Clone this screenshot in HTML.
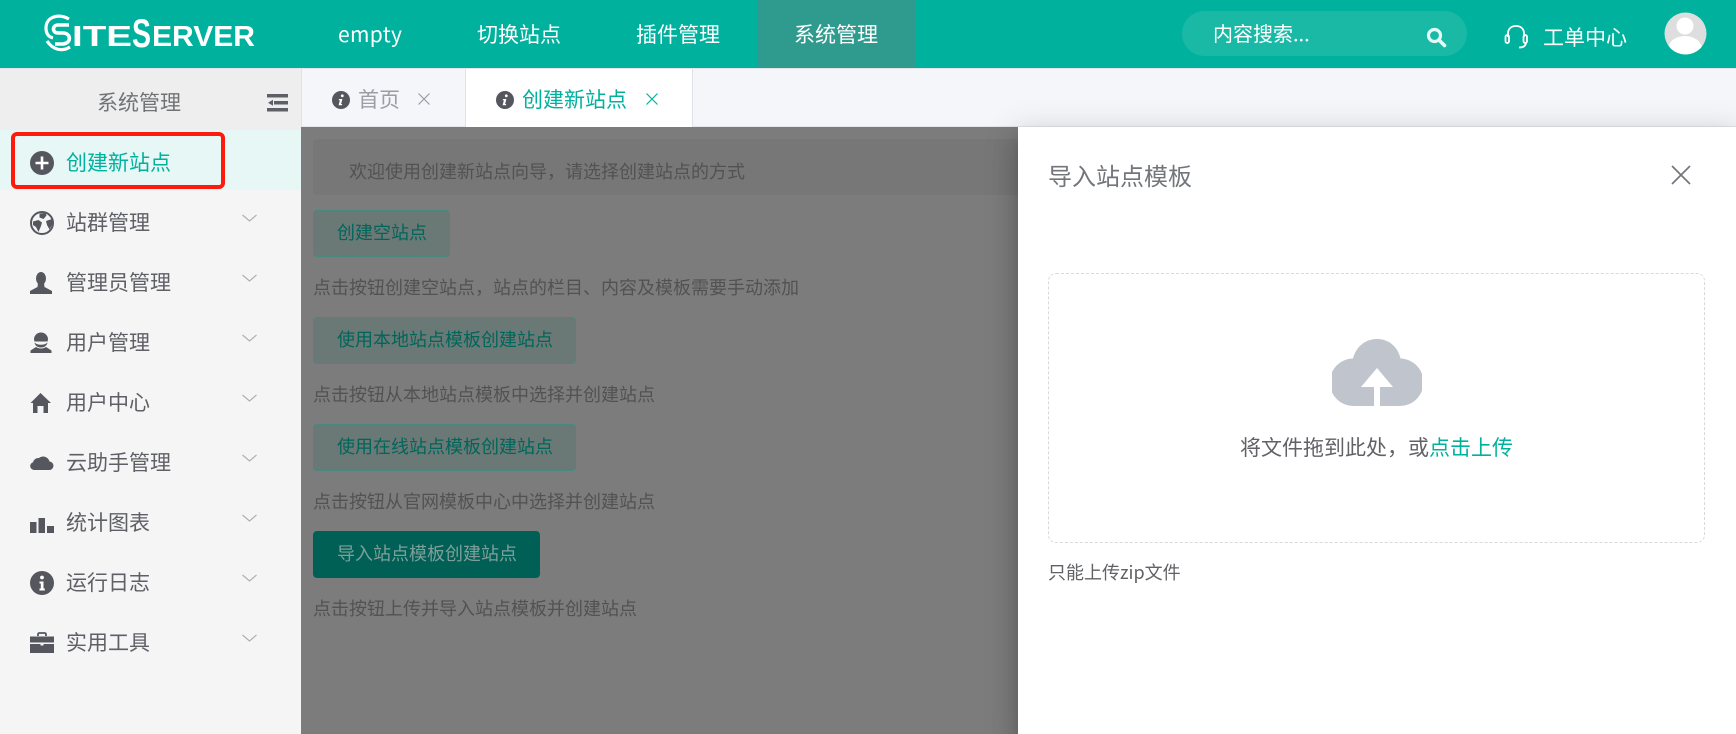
<!DOCTYPE html>
<html lang="zh"><head><meta charset="utf-8"><title>SiteServer</title>
<style>
*{box-sizing:border-box}
html,body{margin:0;padding:0;width:1736px;height:734px;overflow:hidden;background:#fff}
body{font-family:"Liberation Sans","Noto Sans CJK SC",sans-serif;position:relative;color:#606266}
.a{position:absolute}
.t{position:absolute;white-space:nowrap;font-family:"Noto Sans CJK SC","Liberation Sans",sans-serif;line-height:30px;height:30px}
svg{position:absolute;display:block}
.side{font-size:21px;color:#5f6066;left:66px}
.desc{font-size:18px;color:#525252;left:313px}
.btn{position:absolute;left:313px;height:47px;border-radius:4px;border:1px solid #47897f;background:#6a7876;color:#00665a;font-size:18px;font-family:"Noto Sans CJK SC",sans-serif;line-height:43px;padding-left:23px;white-space:nowrap}
</style></head><body>

<div class="a" style="left:0;top:0;width:1736px;height:68px;background:#00b19d"></div>
<div class="a" style="left:757px;top:0;width:159px;height:68px;background:#2f9a8e"></div>
<div class="a" style="left:0;top:68px;width:1736px;height:1px;background:#e3e5ea"></div>

<svg style="left:40px;top:10px" width="222" height="46" viewBox="40 10 222 46">
  <path d="M69 19 C58 13 46 17 46 28 C46 34 49 37 53 38" fill="none" stroke="#fff" stroke-width="3.200"/>
  <path d="M69 25 H58 C52 25 52 33 58 33 H63 C71 33 72 43 63 44 H55" fill="none" stroke="#fff" stroke-width="3.600"/>
  <path d="M47 41 C53 50 62 52 70 47" fill="none" stroke="#fff" stroke-width="3.200"/>
  <text x="72" y="46" font-family="Liberation Sans" font-weight="700" font-size="29" fill="#fff" textLength="60" lengthAdjust="spacingAndGlyphs">ITE</text>
  <text x="132" y="47" font-family="Liberation Sans" font-weight="700" font-size="40" fill="#fff" textLength="19" lengthAdjust="spacingAndGlyphs">S</text>
  <text x="152" y="46" font-family="Liberation Sans" font-weight="700" font-size="29" fill="#fff" textLength="103" lengthAdjust="spacingAndGlyphs">ERVER</text>
</svg>

<div class="t" style="left:338px;top:19px;font-size:21px;color:#fff;letter-spacing:.35px">empty</div>
<div class="t" style="left:477px;top:19px;font-size:21px;color:#fff">切换站点</div>
<div class="t" style="left:636px;top:19px;font-size:21px;color:#fff">插件管理</div>
<div class="t" style="left:794px;top:19px;font-size:21px;color:#fff">系统管理</div>

<div class="a" style="left:1182px;top:11px;width:285px;height:45px;border-radius:23px;background:#1ab9a5"></div>
<div class="t" style="left:1213px;top:18px;font-size:20px;color:#fff">内容搜索...</div>
<svg style="left:1424px;top:25px" width="24" height="24" viewBox="0 0 24 24"><circle cx="10.500" cy="10.500" r="6" fill="none" stroke="#e6f7f5" stroke-width="3.200"/><path d="M15 15l5.500 5.500" stroke="#e6f7f5" stroke-width="3.600" stroke-linecap="round"/></svg>
<svg style="left:1502px;top:23px" width="28" height="28" viewBox="0 0 28 28" fill="none" stroke="#fff" stroke-width="1.800"><path d="M6 14V10.500C6 5.500 9.500 3 14 3s8 2.500 8 7.500V14"/><rect x="3.500" y="12" width="3.500" height="8" rx="1.700"/><rect x="21.500" y="12" width="3.500" height="8" rx="1.700"/><path d="M24 20c-.5 3-3 4.500-7 4.500"/></svg>
<div class="t" style="left:1543px;top:22px;font-size:21px;color:#fff">工单中心</div>
<svg style="left:1664px;top:12px" width="43" height="43" viewBox="0 0 43 43"><defs><clipPath id="c"><circle cx="21.500" cy="21.500" r="21"/></clipPath></defs><circle cx="21.500" cy="21.500" r="21" fill="#dedede"/><g clip-path="url(#c)" fill="#fff"><circle cx="21" cy="14" r="8.500"/><ellipse cx="21" cy="37" rx="17" ry="13"/></g></svg>

<div class="a" style="left:0;top:69px;width:301px;height:665px;background:#f5f5f5"></div>
<div class="a" style="left:0;top:69px;width:301px;height:61px;background:#eeeeee"></div>
<div class="t" style="left:97px;top:87px;font-size:21px;color:#707276">系统管理</div>
<svg style="left:267px;top:94px" width="21" height="18" viewBox="0 0 21 18" fill="#5f6066"><rect x="0" y="0" width="21" height="3.500"/><rect x="7" y="7" width="14" height="3.500"/><path d="M1 8.700L6 5.700V11.700Z"/><rect x="0" y="14" width="21" height="3.500"/></svg>
<div class="a" style="left:0;top:130px;width:301px;height:60px;background:#e6f7f5"></div>
<div class="a" style="left:11px;top:132px;width:214px;height:57px;border:4px solid #fe1b0d;border-radius:6px"></div>

<svg style="left:30px;top:151px" width="24" height="24" viewBox="0 0 24 24"><circle cx="12" cy="12" r="12" fill="#55565e"/><path d="M12 5.500v13M5.500 12h13" stroke="#fff" stroke-width="2.600"/></svg>
<div class="t side" style="top:147px;color:#00b19d">创建新站点</div>

<svg style="left:30px;top:211px" width="24" height="24" viewBox="0 0 24 24"><circle cx="12" cy="12" r="11" fill="#f5f5f5" stroke="#55565e" stroke-width="2"/><path d="M3 10.500l5.500-1.500 3.500 2.500-1 3.500-2.500 6L6 16 3 14zM9.500 2.500l6-.5 1 2.500-3 3.500-4-1.500zM16 10l6-2 .5 5-3 5.500-2.500-4.500z" fill="#55565e"/></svg>
<div class="t side" style="top:207px">站群管理</div>
<svg style="left:30px;top:272px" width="24" height="22" viewBox="0 0 24 22" fill="#55565e"><ellipse cx="11" cy="6.500" rx="5" ry="6.500"/><path d="M8 11h6l.5 4 7.500 4v3H0v-3l7.500-4z"/></svg>
<div class="t side" style="top:267px">管理员管理</div>
<svg style="left:30px;top:332px" width="24" height="22" viewBox="0 0 24 22" fill="#55565e"><path d="M4 7.500a7 7 0 0 1 14 0l-.5 2h-13z"/><path d="M4.500 10.500c3 3 10 3 13 0-.5 3-3 5-6.500 5s-6-2-6.500-5z"/><path d="M6 15c3 2 7 2 10 0l5.500 3.500V21H.500v-2.500z"/></svg>
<div class="t side" style="top:327px">用户管理</div>
<svg style="left:30px;top:393px" width="24" height="20" viewBox="0 0 24 20" fill="#55565e"><path d="M10.500 0L21 10h-3v10h-4.500v-7h-6v7H3V10H.500z"/></svg>
<div class="t side" style="top:387px">用户中心</div>
<svg style="left:30px;top:454px" width="24" height="16" viewBox="0 0 24 16" fill="#55565e"><path d="M4 16A4 4 0 0 1 3 8.200 5.500 5.500 0 0 1 9 4 6.500 6.500 0 0 1 19.500 7.500 4.300 4.300 0 0 1 20 16z"/></svg>
<div class="t side" style="top:447px">云助手管理</div>
<svg style="left:30px;top:518px" width="24" height="15" viewBox="0 0 24 15" fill="#55565e"><rect y="4" width="6.500" height="11"/><rect x="8.500" y="0" width="6.500" height="15"/><rect x="17" y="8" width="7" height="7"/></svg>
<div class="t side" style="top:507px">统计图表</div>
<svg style="left:30px;top:571px" width="24" height="24" viewBox="0 0 24 24"><circle cx="12" cy="12" r="12" fill="#55565e"/><circle cx="12" cy="6.500" r="1.900" fill="#fff"/><path d="M9.500 10.500h4v7h1.300v2H9.500v-2h1.300v-5H9.500z" fill="#fff"/></svg>
<div class="t side" style="top:567px">运行日志</div>
<svg style="left:30px;top:632px" width="24" height="21" viewBox="0 0 24 21" fill="#55565e"><path d="M8 4V2.500Q8 1 9.500 1h5Q16 1 16 2.500V4" fill="none" stroke="#55565e" stroke-width="1.800"/><path d="M0 4.500h24v6H0zM0 12h10.500v1.500h3V12H24v9H0z"/></svg>
<div class="t side" style="top:627px">实用工具</div>

<svg style="left:242px;top:213px" width="15" height="430" viewBox="0 0 15 430" fill="none" stroke="#adafb3" stroke-width="1.200"><path d="M.500 2l7 6 7-6M.500 62l7 6 7-6M.500 122l7 6 7-6M.500 182l7 6 7-6M.500 242l7 6 7-6M.500 302l7 6 7-6M.500 362l7 6 7-6M.500 422l7 6 7-6"/></svg>

<div class="a" style="left:301px;top:69px;width:1435px;height:58px;background:#f5f6fa;border-bottom:1px solid #e3e5ea"></div>
<div class="a" style="left:301px;top:69px;width:1px;height:58px;background:#dfe2ea"></div>
<div class="a" style="left:465px;top:69px;width:228px;height:58px;background:#fff;border-left:1px solid #dfe2ea;border-right:1px solid #dfe2ea"></div>
<svg style="left:332px;top:91px" width="18" height="18" viewBox="0 0 18 18"><circle cx="9" cy="9" r="9" fill="#55565e"/><circle cx="10.300" cy="4.800" r="1.400" fill="#fff"/><path d="M7 8h3.400l-1.300 5h1.100l-.3 1.200H6.600l1.300-5H6.700z" fill="#fff"/></svg>
<div class="t" style="left:358px;top:84px;font-size:21px;color:#9a9da3">首页</div>
<svg style="left:417px;top:92px" width="14" height="14" viewBox="0 0 14 14"><path d="M1.500 1.500l11 11M12.500 1.500l-11 11" stroke="#9a9da3" stroke-width="1.200"/></svg>
<svg style="left:496px;top:91px" width="18" height="18" viewBox="0 0 18 18"><circle cx="9" cy="9" r="9" fill="#55565e"/><circle cx="10.300" cy="4.800" r="1.400" fill="#fff"/><path d="M7 8h3.400l-1.300 5h1.100l-.3 1.200H6.600l1.300-5H6.700z" fill="#fff"/></svg>
<div class="t" style="left:522px;top:84px;font-size:21px;color:#00b19d">创建新站点</div>
<svg style="left:645px;top:92px" width="14" height="14" viewBox="0 0 14 14"><path d="M1.500 1.500l11 11M12.500 1.500l-11 11" stroke="#00b19d" stroke-width="1.200"/></svg>

<div class="a" style="left:301px;top:127px;width:717px;height:607px;background:#7c7c7c"></div>
<div class="a" style="left:313px;top:139px;width:705px;height:56px;background:#777;border-radius:4px"></div>
<div class="t desc" style="left:349px;top:156px">欢迎使用创建新站点向导，请选择创建站点的方式</div>
<div class="btn" style="top:210px;width:137px">创建空站点</div>
<div class="t desc" style="top:272px">点击按钮创建空站点，站点的栏目、内容及模板需要手动添加</div>
<div class="btn" style="top:317px;width:263px">使用本地站点模板创建站点</div>
<div class="t desc" style="top:379px">点击按钮从本地站点模板中选择并创建站点</div>
<div class="btn" style="top:424px;width:263px">使用在线站点模板创建站点</div>
<div class="t desc" style="top:486px">点击按钮从官网模板中心中选择并创建站点</div>
<div class="btn" style="top:531px;width:227px;background:#006055;border-color:#006055;color:#7f9f9a">导入站点模板创建站点</div>
<div class="t desc" style="top:593px">点击按钮上传并导入站点模板并创建站点</div>

<div class="a" style="left:1018px;top:127px;width:718px;height:607px;background:#fff;box-shadow:0 8px 10px -5px rgba(0,0,0,.2),0 16px 24px 2px rgba(0,0,0,.14),0 6px 30px 5px rgba(0,0,0,.12)"></div>
<div class="t" style="left:1048px;top:160px;font-size:24px;color:#72767b">导入站点模板</div>
<svg style="left:1670px;top:164px" width="22" height="22" viewBox="0 0 22 22"><path d="M2 2l18 18M20 2L2 20" stroke="#72767b" stroke-width="1.700"/></svg>
<div class="a" style="left:1048px;top:273px;width:657px;height:270px;border:1px dashed #d9d9d9;border-radius:8px"></div>
<svg style="left:1332px;top:339px" width="90" height="68" viewBox="0 0 90 68"><path fill="#c0c4cc" d="M22 67A23 23 0 0 1 21 19.500C24 8 33 0 45 0S66 8 68.500 19.500A23 23 0 0 1 67 67Z"/><path fill="#fff" d="M45 29L61 48H48V67H42V48H29Z"/></svg>
<div class="t" style="left:1240px;top:432px;font-size:21px;color:#606266">将文件拖到此处，或<span style="color:#00b19d">点击上传</span></div>
<div class="t" style="left:1048px;top:557px;font-size:18px;color:#606266">只能上传zip文件</div>

</body></html>
